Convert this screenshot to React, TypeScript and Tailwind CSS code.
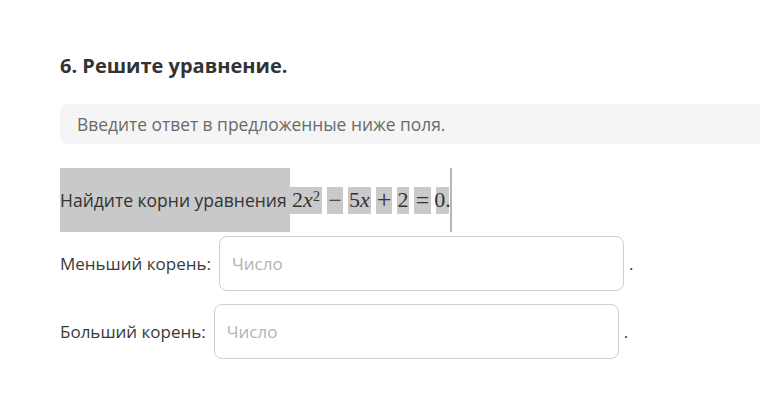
const mathParts = [
  { key: "a", w: "w-[32px]", node: <>2<i>x</i><sup className="relative -top-[3px] text-[14px]">2</sup></> },
  { key: "b", w: "w-[16px]", node: <span className="text-[24px]">−</span> },
  { key: "c", w: "w-[23px]", node: <>5<i>x</i></> },
  { key: "d", w: "w-[16px]", node: <span className="text-[26px]">+</span> },
  { key: "e", w: "w-[12px]", node: <>2</> },
  { key: "f", w: "w-[17px]", node: <span className="text-[24px]">=</span> },
  { key: "g", w: "w-[13px]", node: <>0.</> },
];

function AnswerRow({ label }: { label: string }) {
  return (
    <div className="flex items-center">
      <span className="mr-[8px] text-[17px] text-[#3a3a3a]">{label}</span>
      <input
        type="text"
        placeholder="Число"
        className="h-[55px] w-[405px] rounded-[8px] border border-[#cfcfcf] bg-white pl-[12px] text-[17px] text-[#333] outline-none placeholder:text-[#b3b3b3]"
      />
      <span className="ml-[5px] text-[17px] text-[#3a3a3a]">.</span>
    </div>
  );
}

export default function App() {
  return (
    <div
      className="h-[408px] w-[760px] overflow-hidden bg-white pl-[60px] pt-[50px]"
      style={{ fontFamily: '"Open Sans", "Noto Sans", sans-serif' }}
    >
      <h2 className="text-[20px] font-bold leading-[32px] text-[#333]">6. Решите уравнение.</h2>

      <div className="mt-[22px] flex h-[40px] items-center rounded-l-[8px] bg-[#f5f5f5] pl-[17px] text-[17.4px] text-[#6a6a6a]">
        Введите ответ в предложенные ниже поля.
      </div>

      <div className="mt-[24px] flex h-[64px] items-center">
        <span className="flex h-full w-[230px] items-center bg-[#c9c9c9] text-[17.5px] text-[#333]">
          Найдите корни уравнения
        </span>
        <div
          className="flex items-center gap-[5px] text-[22px] text-[#333]"
          style={{ fontFamily: '"Liberation Serif", "DejaVu Serif", serif' }}
        >
          {mathParts.map((p) => (
            <span key={p.key} className={`flex h-[27px] items-center justify-center whitespace-nowrap bg-[#c9c9c9] leading-none ${p.w}`}>
              {p.node}
            </span>
          ))}
        </div>
        <span className="ml-[1px] h-full w-[2px] bg-[#b5b5b5]" />
      </div>

      <div className="mt-[4px] flex flex-col gap-[13px]">
        <AnswerRow label="Меньший корень:" />
        <AnswerRow label="Больший корень:" />
      </div>
    </div>
  );
}
